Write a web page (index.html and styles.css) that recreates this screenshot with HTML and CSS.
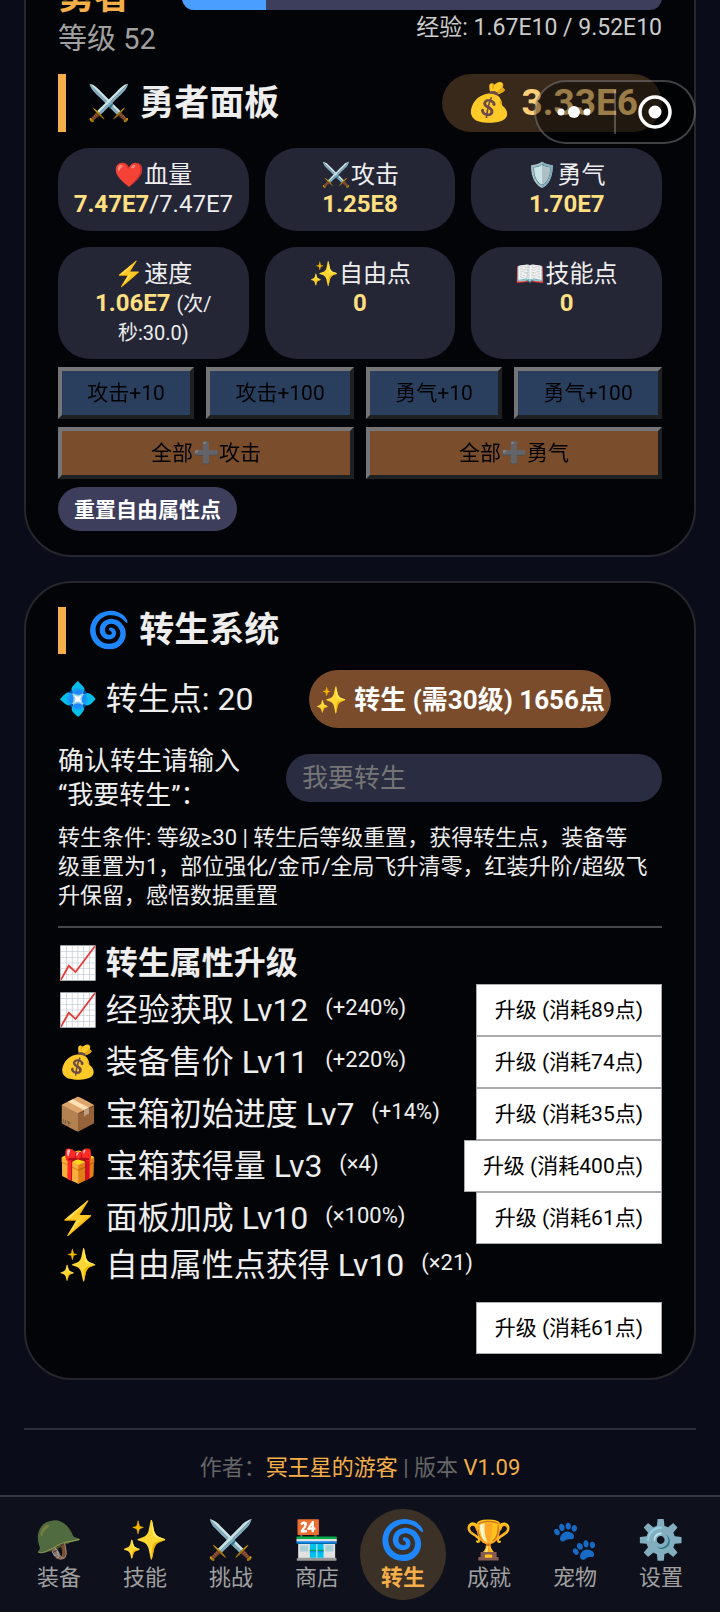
FILE: index.html
```html
<!DOCTYPE html>
<html lang="zh-CN">
<head>
    <meta charset="UTF-8">
    <meta name="viewport" content="width=device-width, initial-scale=1.0">
    <title>勇者面板</title>
    <link rel="stylesheet" href="styles.css">
</head>
<body>

<main class="page">
    <!-- 勇者信息 -->
    <section class="card">
        <div class="hero">
            <div class="hero-info">
                <div class="hero-name">勇者</div>
                <div class="hero-level">等级 52</div>
            </div>
            <div class="hero-exp">
                <div class="exp-bar"><div class="exp-fill" style="width: 17.5%"></div></div>
                <div class="exp-text">经验: 1.67E10 / 9.52E10</div>
            </div>
        </div>

        <div class="card-head">
            <h2 class="card-title">⚔️ 勇者面板</h2>
            <div class="coins">💰 3.33E6</div>
        </div>

        <div class="stats">
            <div class="stat">❤️血量<br><b>7.47E7</b>/7.47E7</div>
            <div class="stat">⚔️攻击<br><b>1.25E8</b></div>
            <div class="stat">🛡️勇气<br><b>1.70E7</b></div>
            <div class="stat">⚡速度<br><b>1.06E7</b> <small>(次/秒:30.0)</small></div>
            <div class="stat">✨自由点<br><b>0</b></div>
            <div class="stat">📖技能点<br><b>0</b></div>
        </div>

        <div class="add-row">
            <button class="add-btn" disabled>攻击+10</button>
            <button class="add-btn" disabled>攻击+100</button>
            <button class="add-btn" disabled>勇气+10</button>
            <button class="add-btn" disabled>勇气+100</button>
        </div>
        <div class="add-row">
            <button class="add-btn add-all" disabled>全部<span class="plus">➕</span>攻击</button>
            <button class="add-btn add-all" disabled>全部<span class="plus">➕</span>勇气</button>
        </div>
        <button class="reset-btn">重置自由属性点</button>
    </section>

    <!-- 转生系统 -->
    <section class="card">
        <h2 class="card-title">🌀 转生系统</h2>

        <div class="rebirth-row">
            <span class="rebirth-points">💠 转生点: 20</span>
            <button class="rebirth-btn">✨ 转生 (需30级) 1656点</button>
        </div>

        <div class="confirm-row">
            <label for="confirm-input">确认转生请输入<br>“我要转生”：</label>
            <input id="confirm-input" class="confirm-input" type="text" placeholder="我要转生">
        </div>

        <p class="rules">转生条件: 等级≥30 | 转生后等级重置，获得转生点，装备等<br>级重置为1，部位强化/金币/全局飞升清零，红装升阶/超级飞<br>升保留，感悟数据重置</p>

        <div class="upgrades">
            <h3 class="upgrades-title">📈 转生属性升级</h3>
            <div class="upgrade">
                <span class="upgrade-name">📈 经验获取 Lv12 <small>(+240%)</small></span>
                <button class="upgrade-btn">升级 (消耗89点)</button>
            </div>
            <div class="upgrade">
                <span class="upgrade-name">💰 装备售价 Lv11 <small>(+220%)</small></span>
                <button class="upgrade-btn">升级 (消耗74点)</button>
            </div>
            <div class="upgrade">
                <span class="upgrade-name">📦 宝箱初始进度 Lv7 <small>(+14%)</small></span>
                <button class="upgrade-btn">升级 (消耗35点)</button>
            </div>
            <div class="upgrade">
                <span class="upgrade-name">🎁 宝箱获得量 Lv3 <small>(×4)</small></span>
                <button class="upgrade-btn">升级 (消耗400点)</button>
            </div>
            <div class="upgrade">
                <span class="upgrade-name">⚡ 面板加成 Lv10 <small>(×100%)</small></span>
                <button class="upgrade-btn">升级 (消耗61点)</button>
            </div>
            <div class="upgrade">
                <span class="upgrade-name">✨ 自由属性点获得 Lv10 <small>(×21)</small></span>
                <button class="upgrade-btn">升级 (消耗61点)</button>
            </div>
        </div>
    </section>

    <footer class="footer">作者：<span>冥王星的游客</span> | 版本 <span>V1.09</span></footer>
</main>

<!-- 底部导航 -->
<nav class="tabs">
    <a class="tab" href="#equip"><span class="tab-icon">🪖</span>装备</a>
    <a class="tab" href="#skill"><span class="tab-icon">✨</span>技能</a>
    <a class="tab" href="#fight"><span class="tab-icon">⚔️</span>挑战</a>
    <a class="tab" href="#shop"><span class="tab-icon">🏪</span>商店</a>
    <a class="tab active" href="#rebirth"><span class="tab-icon">🌀</span>转生</a>
    <a class="tab" href="#achieve"><span class="tab-icon">🏆</span>成就</a>
    <a class="tab" href="#pet"><span class="tab-icon">🐾</span>宠物</a>
    <a class="tab" href="#settings"><span class="tab-icon">⚙️</span>设置</a>
</nav>

<!-- 小程序胶囊按钮 -->
<div class="capsule">
    <button class="capsule-btn" aria-label="更多">
        <svg width="40" height="40" viewBox="0 0 40 40" fill="#fff"><circle cx="6" cy="20" r="3.5"/><circle cx="19" cy="20" r="6"/><circle cx="32" cy="20" r="3.5"/></svg>
    </button>
    <button class="capsule-btn" aria-label="关闭">
        <svg width="40" height="40" viewBox="0 0 40 40"><circle cx="20" cy="20" r="15" fill="none" stroke="#fff" stroke-width="3.5"/><circle cx="20" cy="20" r="6.5" fill="#fff"/></svg>
    </button>
</div>

</body>
</html>
```
FILE: styles.css
```css
* {
    box-sizing: border-box;
}

body {
    margin: 0;
    height: 100vh;
    overflow: hidden;
    display: flex;
    flex-direction: column;
    justify-content: flex-end;
    background-color: #0a0d19;
    color: #eeeeee;
    font-family: Roboto, "Noto Sans CJK SC", "Noto Color Emoji", sans-serif;
    font-size: 22px;
    line-height: 29px;
}

button, input {
    font-family: inherit;
    margin: 0;
}

.page {
    flex: none;
    padding: 0 24px;
}

.card {
    background-color: #030407;
    border: 2px solid #26272c;
    border-radius: 48px;
    padding: 24px 32px;
    margin-bottom: 24px;
}

/* 顶部信息 */
.hero {
    display: flex;
    align-items: center;
    gap: 26px;
    margin-bottom: 16px;
}

.hero-name {
    font-size: 36px;
    line-height: 47px;
    font-weight: bold;
    color: #f5ae48;
}

.hero-level {
    font-size: 29px;
    line-height: 37px;
    color: #a0a0a0;
}

.hero-exp {
    flex: 1;
    padding-bottom: 4px;
}

.exp-bar {
    height: 24px;
    margin-bottom: 3px;
    border-radius: 12px;
    background-color: #3d3d5c;
    overflow: hidden;
}

.exp-fill {
    height: 100%;
    background-color: #4a9eff;
}

.exp-text {
    font-size: 23px;
    text-align: right;
    color: #cccccc;
}

.card-head {
    display: flex;
    justify-content: space-between;
    margin-bottom: 16px;
}

.card-title {
    display: flex;
    align-items: center;
    margin: 0;
    padding-left: 21px;
    border-left: 8px solid #f5ae48;
    font-size: 35px;
    line-height: 47px;
}

.coins {
    padding: 0 24px;
    border-radius: 32px;
    background-color: #38291b;
    color: #ffcf78;
    font-size: 37px;
    line-height: 58px;
    font-weight: bold;
}

/* 属性格子 */
.stats {
    display: grid;
    grid-template-columns: repeat(3, 1fr);
    gap: 16px;
    margin-bottom: 8px;
}

.stat {
    padding: 13px 12px 12px;
    border-radius: 32px;
    background-color: #242636;
    font-size: 24px;
    text-align: center;
}

.stat b {
    color: #ffdf80;
}

.stat small {
    font-size: 20px;
    line-height: 20px;
}

.add-row {
    display: flex;
    gap: 12px;
    margin-bottom: 8px;
}

.add-btn {
    flex: 1 1 auto;
    height: 52px;
    padding: 0 0 4px;
    border: 4px solid;
    border-color: #e6e6e6 #3c3c3c #3c3c3c #e6e6e6;
    background-color: #517ab5;
    color: #000000;
    font-size: 21px;
    opacity: 0.5;
}

.add-all {
    flex: 1;
    background-color: #f19652;
}

.plus {
    filter: brightness(2);
}

.reset-btn {
    display: block;
    height: 44px;
    padding: 0 16px 3px;
    border: none;
    border-radius: 22px;
    background-color: #3d3d5c;
    color: #ffffff;
    font-size: 21px;
    font-weight: bold;
}

/* 转生 */
.rebirth-row {
    display: flex;
    align-items: center;
    gap: 56px;
    margin: 16px 0;
}

.rebirth-points {
    font-size: 32px;
    line-height: 42px;
}

.rebirth-btn {
    height: 58px;
    padding: 0 6px 4px;
    border: none;
    border-radius: 29px;
    background-color: #7a4c2b;
    color: #ffffff;
    font-size: 26px;
    font-weight: bold;
}

.confirm-row {
    display: flex;
    align-items: center;
    justify-content: space-between;
    gap: 46px;
    font-size: 26px;
    line-height: 34px;
}

.confirm-input {
    flex: 1;
    min-width: 0;
    height: 48px;
    padding: 0 16px;
    border: none;
    border-radius: 24px;
    background-color: #2a2d42;
    color: #ffffff;
    font-size: 26px;
}

.confirm-input::placeholder {
    color: #757575;
}

.rules {
    margin: 11px 0 16px;
}

.upgrades {
    border-top: 2px solid #46474a;
    padding-top: 14px;
}

.upgrades-title {
    margin: 0;
    font-size: 32px;
    line-height: 42px;
}

.upgrade {
    display: flex;
    flex-wrap: wrap;
    align-items: center;
    gap: 16px;
}

.upgrade-name {
    font-size: 32px;
    line-height: 42px;
}

.upgrade-name small {
    margin-left: 9px;
    font-size: 22px;
    vertical-align: 6px;
    line-height: 22px;
}

.upgrade-btn {
    height: 52px;
    margin-left: auto;
    padding: 0 18px 4px;
    border: 1px solid #aaaaaa;
    background-color: #ffffff;
    color: #000000;
    font-size: 21px;
}

.footer {
    margin-top: 48px;
    padding: 23px 0 13px;
    border-top: 2px solid #2a2c36;
    text-align: center;
    color: #666666;
}

.footer span {
    color: #f5ae48;
}

/* 底部导航 */
.tabs {
    flex: none;
    display: flex;
    padding: 12px 16px;
    border-top: 2px solid #34363f;
    background-color: #0e101b;
}

.tab {
    flex: 1;
    display: flex;
    flex-direction: column;
    align-items: center;
    padding: 8px 0;
    border-radius: 50%;
    color: #a0a0a0;
    text-decoration: none;
}

.tab-icon {
    font-size: 38px;
    line-height: 46px;
}

.tab.active {
    background-color: #3b3127;
    color: #f5ae48;
    font-weight: bold;
}

/* 浮在页面上的胶囊 */
.capsule {
    position: fixed;
    top: 80px;
    right: 24px;
    display: flex;
    width: 162px;
    height: 64px;
    padding: 8px 0;
    border: 2px solid rgba(255, 255, 255, 0.25);
    border-radius: 32px;
    background-color: rgba(0, 0, 0, 0.4);
}

.capsule-btn {
    flex: 1;
    display: flex;
    align-items: center;
    justify-content: center;
    padding: 0;
    border: none;
    background: none;
}

.capsule-btn + .capsule-btn {
    border-left: 2px solid rgba(255, 255, 255, 0.25);
}
```
